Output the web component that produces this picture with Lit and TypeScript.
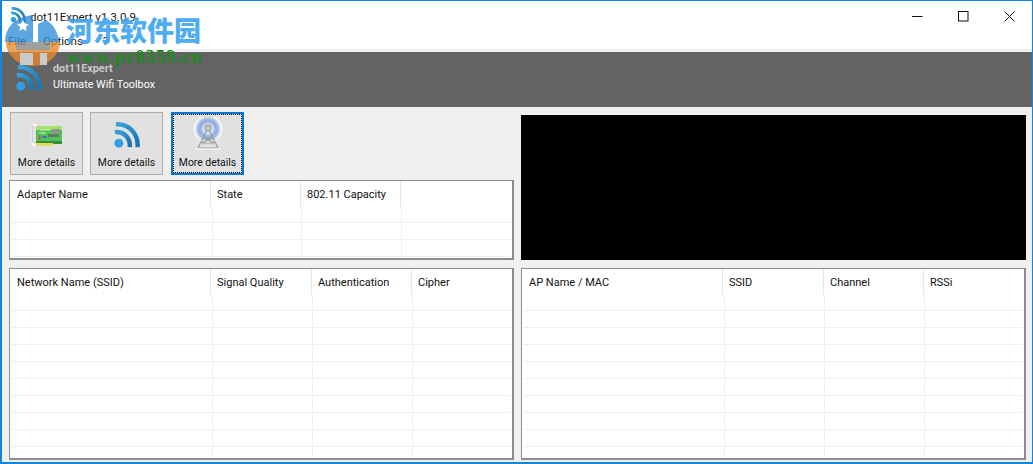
import { LitElement, html, css } from "lit";
import { customElement } from "lit/decorators.js";

const rss = (size: number, id: string) => html`<svg width=${size} height=${size} viewBox="0 0 28 28" class="ic">
  <defs><linearGradient id=${id} x1="0" y1="0" x2="1" y2="1"><stop offset="0" stop-color="#3aa3dc"/><stop offset="1" stop-color="#1573ad"/></linearGradient></defs>
  <circle cx="6" cy="22" r="4.6" fill="#2f9fe0"/>
  <path d="M2 10.5 C11 9.5 18 16 17.5 26" fill="none" stroke="url(#${id})" stroke-width="4.6"/>
  <path d="M3 2.5 C16 1.5 26.5 12 25.5 26" fill="none" stroke="url(#${id})" stroke-width="4.6"/>
</svg>`;

const card = html`<svg width="34" height="26" viewBox="0 0 34 26">
  <path d="M7 2 H2.5 V22 H6" fill="none" stroke="#fff" stroke-width="1.4"/>
  <path d="M2.5 2 V20" stroke="#b9b9b9" stroke-width=".7"/>
  <rect x="6" y="3" width="26" height="17" fill="#4fc35a"/>
  <rect x="6" y="3" width="26" height="4" fill="#a8e070"/>
  <rect x="6" y="18" width="26" height="3" fill="#2f8f3c"/>
  <rect x="22" y="6" width="8" height="5" fill="#8a9a8a"/>
  <rect x="18" y="11" width="11" height="3" fill="#5c7c64"/>
  <rect x="12" y="13" width="5" height="2" fill="#3d77c8"/>
  <rect x="9" y="12" width="1.5" height="5" fill="#d9483a"/>
  <rect x="6" y="20" width="17" height="2.6" fill="#e8dc4a"/>
  <path d="M10 7 H20 M9 10 H16" stroke="#d8f0c0" stroke-width="1"/>
</svg>`;

const tower = html`<svg width="30" height="33" viewBox="0 0 30 33">
  <defs><radialGradient id="tg"><stop offset="0" stop-color="#ffffff"/><stop offset=".35" stop-color="#dfe7f8"/><stop offset=".7" stop-color="#8fa8e0"/><stop offset="1" stop-color="#b9c9ee"/></radialGradient></defs>
  <circle cx="15" cy="12" r="13.5" fill="none" stroke="#f4f6fb" stroke-width="1.6"/>
  <circle cx="15" cy="12" r="11.5" fill="url(#tg)"/>
  <circle cx="15" cy="11" r="3.2" fill="#c4c4c4" stroke="#858585" stroke-width=".8"/>
  <path d="M13.5 14 L5 31 M16.5 14 L25 31 M11 21 H19 M8.5 26 H21.5 M11 21 L21.5 26 M19 21 L8.5 26 M5 31 H25" fill="none" stroke="#9a9a9a" stroke-width="1.2"/>
  <path d="M2 32 H28" stroke="#fff" stroke-width="1"/>
</svg>`;

type Col = { t: string; w: number };

@customElement("app-root")
export class AppRoot extends LitElement {
  static styles = css`
    :host { display: block; width: 1033px; height: 464px; font-family: Roboto, "Liberation Sans", Arial, sans-serif; overflow: hidden; }
    * { box-sizing: border-box; }
    .win { position: relative; width: 1033px; height: 464px; border: 1px solid #1185e0; border-width: 1px 1px 2px 2px; background: #f0f0f0; display: flex; flex-direction: column; font-size: 11px; color: #111; overflow: hidden; }
    .title { height: 31px; background: #fff; display: flex; align-items: center; flex: none; font-size: 11.5px; color: #1a1a1a; }
    .appic { margin: 0 4px 0 8px; display: block; }
    .tname { flex: 1; }
    .wb { width: 46px; height: 30px; display: flex; align-items: center; justify-content: center; }
    .menu { height: 17px; background: #fff; display: flex; flex: none; padding-left: 6px; gap: 17px; color: #222; align-items: center; font-size: 11.5px; }
    .stripe { height: 3px; background: #f0f0f0; flex: none; }
    .band { height: 55px; background: #636363; flex: none; display: flex; align-items: center; padding-left: 13px; gap: 11px; color: #fff; }
    .band .ic { margin-top: -2px; }
    .band .txt { line-height: 16px; display: flex; flex-direction: column; margin-top: -5px; font-size: 10.8px; }
    .band b { color: #c9c9c9; font-weight: bold; }
    .body { flex: 1; display: grid; grid-template-columns: 505px 505px; column-gap: 7px; padding: 0 0 1px 7px; min-height: 0; grid-template-rows: 153px 192px; }
    .left { display: flex; flex-direction: column; }
    .btns { display: flex; gap: 7px; height: 73px; padding: 5px 0 0 1px; flex: none; }
    .btn { width: 73px; height: 63px; background: #e1e1e1; border: 1px solid #adadad; display: flex; flex-direction: column; align-items: center; color: #111; position: relative; }
    .btn .i { height: 38px; display: flex; align-items: flex-end; justify-content: center; padding-bottom: 2px; }
    .btn .l { line-height: 14px; margin-top: 5px; white-space: nowrap; font-size: 10.4px; }
    .sel { border: 2px solid #0078d7; margin-left: 1px; }
    .sel .l { margin-top: 4px; }
    .sel::after { content: ""; position: absolute; inset: 0; border: 1px dotted #000; }
    .black { background: #000; margin-top: 8px; height: 145px; }
    .tbl { background: #fff; border: 2px solid #8c8c94; border-width: 1px 2px 2px 1px; position: relative; overflow: hidden; }
    .left .tbl { height: 80px; flex: none; }
    .row2 { margin-top: 8px; height: 192px; }
    .hd { display: flex; height: 26px; }
    .hc { position: relative; padding: 6px 0 0 7px; line-height: 15px; border-right: 1px solid #e6e6e6; white-space: nowrap; flex: none; }
    .hc + .hc { padding-left: 6px; }
    .hc:last-child { border-right: 0; }
    .rows { position: absolute; left: 2px; right: 2px; top: 0; bottom: 0; pointer-events: none; }
    .gl { position: absolute; left: 0; right: 0; height: 1px; background: #f0f0f0; }
    .gv { position: absolute; width: 1px; bottom: 2px; background: #f0f0f0; }
    .wm { position: absolute; left: -2px; top: -1px; pointer-events: none; }
    .logo { position: absolute; left: 0; top: 0; opacity: .78; }
    .wm1 { position: absolute; left: 66px; top: 13px; font: 900 27px "Noto Sans CJK SC", sans-serif; color: #3fa5f0; opacity: .92; line-height: 34px; white-space: nowrap; }
    .wm2 { position: absolute; left: 67px; top: 47px; font: bold 18.5px "Liberation Serif", serif; color: #1c8a1c; letter-spacing: 1px; line-height: 20px; white-space: nowrap; }
  `;

  table(cols: Col[], lines: number[], vtop: number, extra = "") {
    let x = -1;
    const vs = cols.slice(0, -1).map((c, i) => (x += c.w) - (i > 0 ? 1 : 0));
    return html`<div class="tbl ${extra}">
      <div class="rows">
        ${lines.map((y) => html`<div class="gl" style="top:${y}px"></div>`)}
        ${vs.map((v) => html`<div class="gv" style="left:${v}px;top:${vtop}px"></div>`)}
      </div>
      <div class="hd">${cols.map((c) => html`<div class="hc" style="width:${c.w}px">${c.t}</div>`)}</div>
    </div>`;
  }

  render() {
    const lines = [41, 58, 75, 92, 109, 126, 143, 160, 177];
    return html`<div class="win">
      <div class="title">
        <span class="appic">${rss(16, "r1")}</span>
        <span class="tname">dot11Expert v1.3.0.9</span>
        <span class="wb"><svg width="11" height="11" viewBox="0 0 11 11"><path d="M0 5.5H10.5" stroke="#111" stroke-width="1"/></svg></span>
        <span class="wb"><svg width="11" height="11" viewBox="0 0 11 11"><rect x=".5" y=".5" width="9.5" height="9.5" fill="none" stroke="#111"/></svg></span>
        <span class="wb"><svg width="11" height="11" viewBox="0 0 11 11"><path d="M.5 .5L10.5 10.5M10.5 .5L.5 10.5" stroke="#111" stroke-width="1"/></svg></span>
      </div>
      <div class="menu"><span>File</span><span>Options</span><span>&nbsp;?</span></div>
      <div class="stripe"></div>
      <div class="band">
        ${rss(27, "r2")}
        <div class="txt"><b>dot11Expert</b><span>Ultimate Wifi Toolbox</span></div>
      </div>
      <div class="body">
        <div class="left">
          <div class="btns">
            <div class="btn"><div class="i">${card}</div><div class="l">More details</div></div>
            <div class="btn"><div class="i">${rss(27, "r3")}</div><div class="l">More details</div></div>
            <div class="btn sel"><div class="i">${tower}</div><div class="l">More details</div></div>
          </div>
          ${this.table(
            [{ t: "Adapter Name", w: 201 }, { t: "State", w: 90 }, { t: "802.11 Capacity", w: 100 }, { t: "", w: 110 }],
            [41, 58, 75], 26)}
        </div>
        <div class="black"></div>
        ${this.table(
          [{ t: "Network Name (SSID)", w: 201 }, { t: "Signal Quality", w: 101 }, { t: "Authentication", w: 100 }, { t: "Cipher", w: 100 }],
          lines, 26, "row2")}
        ${this.table(
          [{ t: "AP Name / MAC", w: 201 }, { t: "SSID", w: 101 }, { t: "Channel", w: 100 }, { t: "RSSi", w: 100 }],
          lines, 26, "row2")}
      </div>
      <div class="wm">
        <svg class="logo" width="70" height="72" viewBox="0 0 70 72">
          <path d="M6 42 H60 A27 24 0 0 1 6 42 Z" fill="#e8892a"/>
          <path d="M5 42 C5 28 14 17 33 15 L33 42 Z" fill="#2f8fd8"/>
          <path d="M38 42 V24 L46 20 C53 24 58 32 59 42 Z" fill="#2f8fd8"/>
          <path d="M16 42 H50 V50 H16 Z" fill="#5a86a8" opacity=".7"/>
          <rect x="20" y="53" width="13" height="12" fill="#e8e8e8"/>
          <rect x="40" y="53" width="7" height="12" fill="#e8e8e8"/>
          <path d="M23 20 l1.8 3.6 4 .6 -2.9 2.8 .7 4 -3.6 -1.9 -3.6 1.9 .7 -4 -2.9 -2.8 4 -.6 z" fill="#fff"/>
        </svg>
        <div class="wm1">河东软件园</div>
        <div class="wm2">www.pc0359.cn</div>
      </div>
    </div>`;
  }
}
